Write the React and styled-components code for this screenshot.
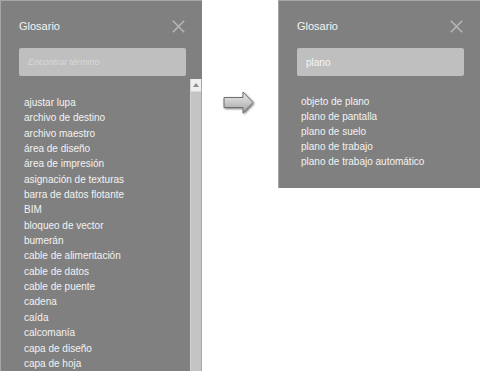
import React from "react"
import styled, { createGlobalStyle } from "styled-components"

const GlobalStyle = createGlobalStyle`
  html, body {
    margin: 0;
    padding: 0;
    background: #ffffff;
    overflow: hidden;
  }
  body {
    font-family: "Liberation Sans", Arial, sans-serif;
  }
`

const Page = styled.div`
  display: flex;
  align-items: flex-start;
  width: 481px;
  height: 371px;
`

const Panel = styled.div`
  box-sizing: border-box;
  width: ${p => p.$width}px;
  height: ${p => p.$height}px;
  background: #808080;
  border-top: 1px solid #a6a6a6;
  border-left: 1px solid #a6a6a6;
  display: flex;
  flex-direction: column;
  overflow: hidden;
`

const Header = styled.div`
  display: flex;
  justify-content: space-between;
  align-items: center;
  padding: 17px 16px 0 18px;
  height: 16px;
`

const Title = styled.h2`
  margin: 0;
  font-size: 11px;
  font-weight: normal;
  color: #f4f4f4;
`

const CloseButton = styled.button`
  border: 0;
  padding: 0;
  margin-right: 1px;
  background: none;
  width: 13px;
  height: 13px;
  display: flex;
  cursor: pointer;
`

const Search = styled.input`
  box-sizing: border-box;
  margin: 14px 16px 0 18px;
  width: 167px;
  height: 28px;
  border: 0;
  border-radius: 2px;
  background: #bfbfbf;
  padding: 0 9px;
  font-family: "Liberation Sans", Arial, sans-serif;
  font-size: ${p => (p.value ? 10 : 9)}px;
  color: #f6f6f6;
  outline: none;

  &::placeholder {
    color: #d9d9d9;
    font-style: italic;
  }
`

const Body = styled.div`
  display: flex;
  flex: 1;
  margin-top: 3px;
  min-height: 0;
`

const List = styled.ul`
  list-style: none;
  flex: 1;
  margin: 0;
  padding: ${p => p.$top}px 0 0 ${p => p.$left}px;
`

const Item = styled.li`
  font-size: 10px;
  line-height: ${p => p.$line}px;
  height: ${p => p.$line}px;
  color: #f3f3f3;
  white-space: nowrap;
`

const Scrollbar = styled.div`
  box-sizing: border-box;
  width: 12px;
  background: #c4c4c4;
  border-left: 1px solid #d2d2d2;
  border-right: 1px solid #a8a8a8;
  display: flex;
  flex-direction: column;
`

const ScrollUp = styled.div`
  height: 12px;
  background: #efefef;
  display: flex;
  align-items: center;
  justify-content: center;
  border-bottom: 1px solid #d8d8d8;
`

const ArrowSlot = styled.div`
  width: 76px;
  display: flex;
  justify-content: center;
  padding-top: 90px;
  padding-right: 2px;
  box-sizing: border-box;
`

const CloseIcon = () => (
  <svg width="13" height="13" viewBox="0 0 13 13">
    <path d="M0.8 0.8 L12.2 12.2 M12.2 0.8 L0.8 12.2" stroke="#b9b9b9" strokeWidth="1.4" fill="none" />
  </svg>
)

const Arrow = () => (
  <svg width="34" height="26" viewBox="0 0 34 26">
    <defs>
      <linearGradient id="arrowFill" x1="0" y1="0" x2="0" y2="1">
        <stop offset="0" stopColor="#ececec" />
        <stop offset="0.5" stopColor="#c9c9c9" />
        <stop offset="1" stopColor="#9e9e9e" />
      </linearGradient>
      <filter id="arrowShadow" x="-20%" y="-20%" width="150%" height="150%">
        <feGaussianBlur in="SourceAlpha" stdDeviation="0.9" />
        <feOffset dx="0.8" dy="1" result="blur" />
        <feComponentTransfer><feFuncA type="linear" slope="0.55" /></feComponentTransfer>
        <feMerge>
          <feMergeNode />
          <feMergeNode in="SourceGraphic" />
        </feMerge>
      </filter>
    </defs>
    <path
      d="M2 7.5 H21 V2 L31 12.5 L21 23 V17.5 H2 Z"
      fill="url(#arrowFill)"
      stroke="#6f6f6f"
      strokeWidth="1"
      strokeLinejoin="round"
      filter="url(#arrowShadow)"
    />
  </svg>
)

const allTerms = [
  "ajustar lupa",
  "archivo de destino",
  "archivo maestro",
  "área de diseño",
  "área de impresión",
  "asignación de texturas",
  "barra de datos flotante",
  "BIM",
  "bloqueo de vector",
  "bumerán",
  "cable de alimentación",
  "cable de datos",
  "cable de puente",
  "cadena",
  "caída",
  "calcomanía",
  "capa de diseño",
  "capa de hoja",
]

const foundTerms = [
  "objeto de plano",
  "plano de pantalla",
  "plano de suelo",
  "plano de trabajo",
  "plano de trabajo automático",
]

const Glossary = ({ width, height, query, terms, scroll, listTop, listLeft, line }) => (
  <Panel $width={width} $height={height}>
    <Header>
      <Title>Glosario</Title>
      <CloseButton aria-label="Cerrar">
        <CloseIcon />
      </CloseButton>
    </Header>
    <Search placeholder="Encontrar término" value={query} readOnly />
    <Body>
      <List $top={listTop} $left={listLeft}>
        {terms.map(t => (
          <Item key={t} $line={line}>{t}</Item>
        ))}
      </List>
      {scroll && (
        <Scrollbar>
          <ScrollUp>
            <svg width="6" height="4" viewBox="0 0 6 4">
              <path d="M3 0 L6 4 H0 Z" fill="#8e8e8e" />
            </svg>
          </ScrollUp>
        </Scrollbar>
      )}
    </Body>
  </Panel>
)

const App = () => (
  <>
    <GlobalStyle />
    <Page>
      <Glossary width={202} height={371} query="" terms={allTerms} scroll listTop={16} listLeft={23} line={15.35} />
      <ArrowSlot>
        <Arrow />
      </ArrowSlot>
      <Glossary width={202} height={188} query="plano" terms={foundTerms} listTop={15} listLeft={22} line={15.1} />
    </Page>
  </>
)

export default App
